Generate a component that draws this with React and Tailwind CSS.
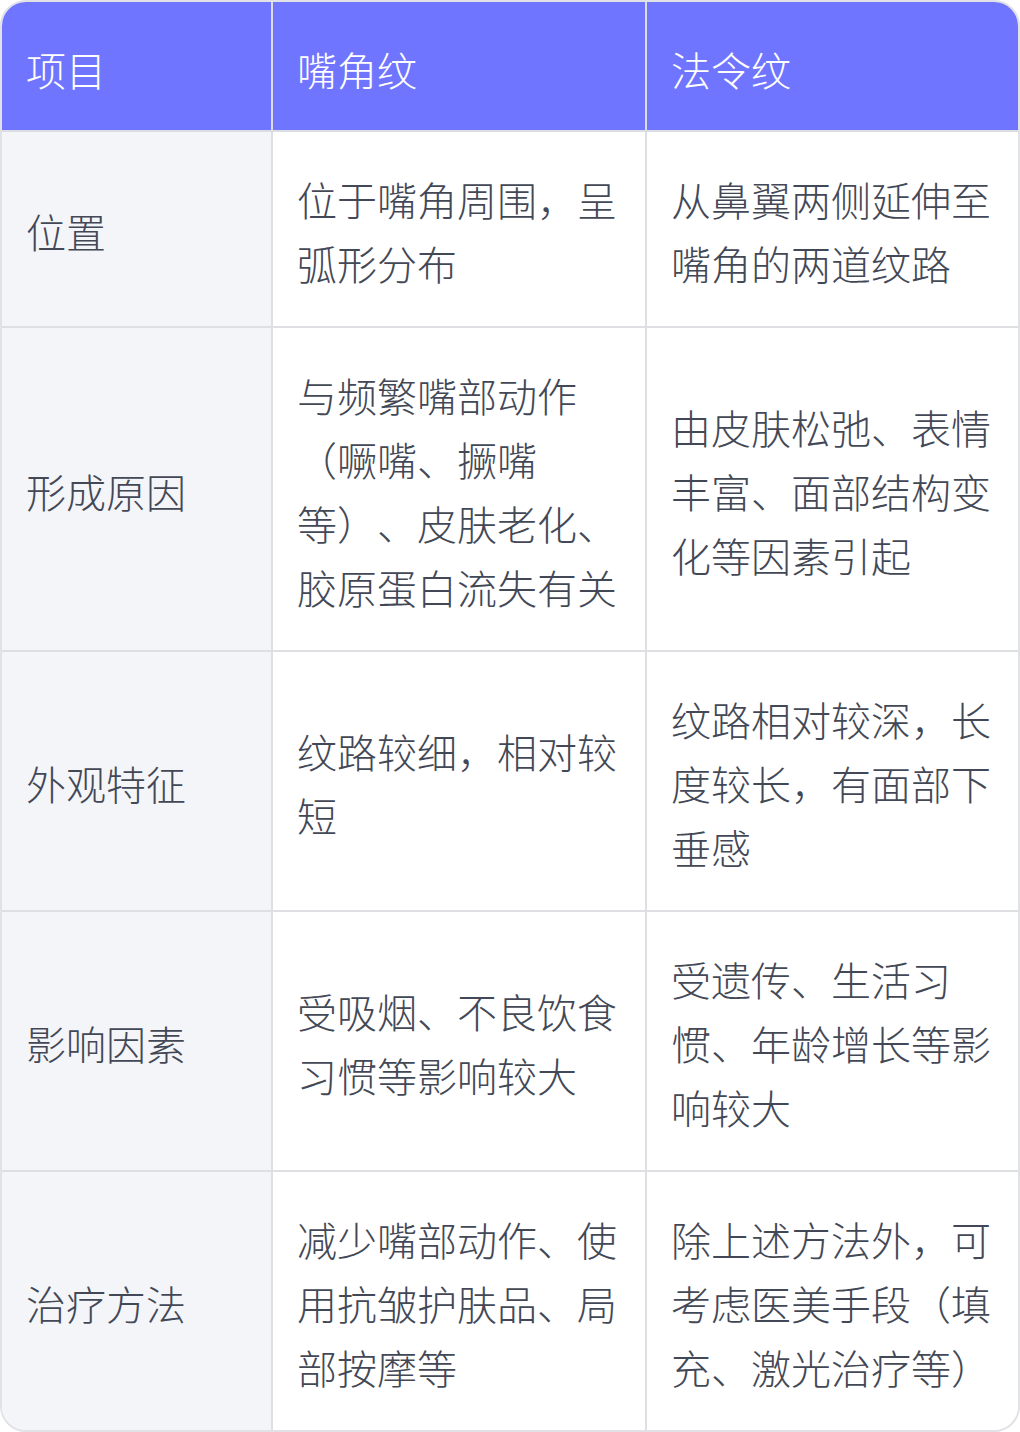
const rows = [
  ["位置", "位于嘴角周围，呈弧形分布", "从鼻翼两侧延伸至嘴角的两道纹路"],
  ["形成原因", "与频繁嘴部动作（噘嘴、撅嘴等）、皮肤老化、胶原蛋白流失有关", "由皮肤松弛、表情丰富、面部结构变化等因素引起"],
  ["外观特征", "纹路较细，相对较短", "纹路相对较深，长度较长，有面部下垂感"],
  ["影响因素", "受吸烟、不良饮食习惯等影响较大", "受遗传、生活习惯、年龄增长等影响较大"],
  ["治疗方法", "减少嘴部动作、使用抗皱护肤品、局部按摩等", "除上述方法外，可考虑医美手段（填充、激光治疗等）"],
];

export default function App() {
  return (
    <div
      className="w-[1020px] bg-white [text-spacing-trim:space-all]"
      style={{ fontFamily: '"Noto Sans CJK SC", "Noto Sans", sans-serif' }}
    >
      <div className="border-2 border-[#e1e2e6] rounded-[26px] overflow-hidden">
        <div className="grid grid-cols-[271px_374px_1fr] text-[40px] leading-[64px] font-light">
          {["项目", "嘴角纹", "法令纹"].map((h, i) => (
            <div
              key={h}
              className={`bg-[#7075ff] text-white px-6 pt-[35px] pb-[29px] border-b-2 border-[#dcdde3] ${i < 2 ? "border-r-2" : ""}`}
            >
              {h}
            </div>
          ))}
          {rows.map((r, ri) =>
            r.map((c, ci) => (
              <div
                key={ri + "-" + ci}
                className={`px-6 pt-[35px] pb-[31px] flex items-center text-[#434856] border-[#dedfe3] ${ci < 2 ? "border-r-2" : ""} ${ri < rows.length - 1 ? "border-b-2" : ""} ${ci === 0 ? "bg-[#f4f5f9]" : "bg-white"}`}
              >
                <span>{c}</span>
              </div>
            ))
          )}
        </div>
      </div>
    </div>
  );
}
